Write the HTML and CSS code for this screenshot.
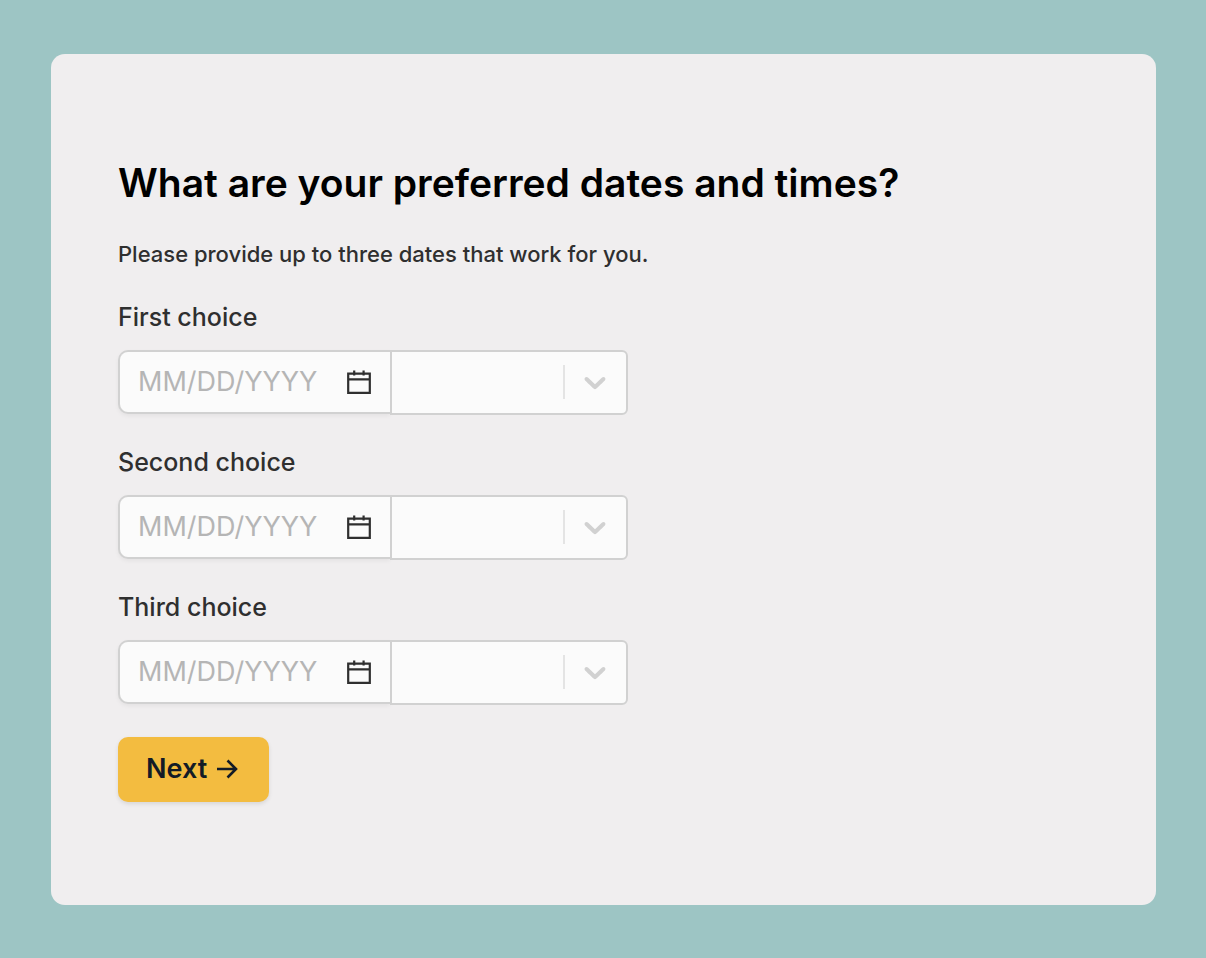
FILE: index.html
```html
<!DOCTYPE html>
<html lang="en">
<head>
    <meta charset="UTF-8">
    <meta name="viewport" content="width=device-width, initial-scale=1">
    <title>Preferred dates and times</title>
    <link rel="stylesheet" href="styles.css">
</head>
<body>

<svg class="sprite" aria-hidden="true">
    <symbol id="calendar" viewBox="0 0 24 24">
        <path d="M1.2 3.7h21.6v19.1H1.2zM1.2 9.3h21.6M7.2 .5v5M16.6 .5v5" fill="none" stroke="currentColor" stroke-width="2.2"/>
    </symbol>
    <symbol id="chevron" viewBox="0 0 20 20">
        <path d="M4.516 7.548c.436-.446 1.043-.481 1.576 0L10 11.295l3.908-3.747c.533-.481 1.141-.446 1.574 0 .436.445.408 1.197 0 1.615-.406.418-4.695 4.502-4.695 4.502a1.095 1.095 0 0 1-1.576 0S4.924 9.581 4.516 9.163c-.409-.418-.436-1.17 0-1.615z" fill="currentColor"/>
    </symbol>
</svg>

<main class="card">
    <h1>What are your preferred dates and times?</h1>
    <p class="hint">Please provide up to three dates that work for you.</p>

    <form id="datesForm">
        <div class="choice">
            <label for="date1">First choice</label>
            <div class="fields">
                <div class="date">
                    <input type="text" id="date1" name="date1" placeholder="MM/DD/YYYY">
                    <button type="button" class="picker" aria-label="Open calendar"><svg><use href="#calendar"/></svg></button>
                </div>
                <div class="time">
                    <select name="time1" aria-label="First choice time"><option value=""></option></select>
                    <span class="indicator"><svg><use href="#chevron"/></svg></span>
                </div>
            </div>
        </div>

        <div class="choice">
            <label for="date2">Second choice</label>
            <div class="fields">
                <div class="date">
                    <input type="text" id="date2" name="date2" placeholder="MM/DD/YYYY">
                    <button type="button" class="picker" aria-label="Open calendar"><svg><use href="#calendar"/></svg></button>
                </div>
                <div class="time">
                    <select name="time2" aria-label="Second choice time"><option value=""></option></select>
                    <span class="indicator"><svg><use href="#chevron"/></svg></span>
                </div>
            </div>
        </div>

        <div class="choice">
            <label for="date3">Third choice</label>
            <div class="fields">
                <div class="date">
                    <input type="text" id="date3" name="date3" placeholder="MM/DD/YYYY">
                    <button type="button" class="picker" aria-label="Open calendar"><svg><use href="#calendar"/></svg></button>
                </div>
                <div class="time">
                    <select name="time3" aria-label="Third choice time"><option value=""></option></select>
                    <span class="indicator"><svg><use href="#chevron"/></svg></span>
                </div>
            </div>
        </div>

        <button type="submit" class="next">
            Next
            <svg viewBox="0 0 22 20" aria-hidden="true"><path d="M1 10h19M11.5 1.5L20 10l-8.5 8.5" fill="none" stroke="currentColor" stroke-width="2.6"/></svg>
        </button>
    </form>
</main>

</body>
</html>
```
FILE: styles.css
```css
* {
    box-sizing: border-box;
}

body {
    font-family: Inter, sans-serif;
    font-weight: 500;
    background: #9dc5c4;
    color: #2f2f2f;
    margin: 0;
    padding: 54px 50px 53px 51px;
}

.sprite {
    display: none;
}

.card {
    padding: 104px 67px 103px;
    background: #f0eeef;
    border-radius: 14px;
}

h1 {
    margin: 0 0 30px;
    font-size: 39px;
    font-weight: 600;
    line-height: 50px;
    color: #000;
}

.hint {
    margin: 0 0 32px;
    font-size: 22px;
    line-height: 32px;
}

.choice {
    margin-bottom: 32px;
}

label {
    display: block;
    margin-bottom: 18px;
    font-size: 25px;
    line-height: 30px;
}

.fields {
    display: flex;
    align-items: flex-start;
    max-width: 510px;
}

.date {
    display: flex;
    align-items: center;
    flex: 0 0 272px;
    min-width: 0;
    height: 64px;
    padding: 0 19px 0 18px;
    background: #fbfbfb;
    border: 2px solid #d1d1d1;
    border-right: 0;
    border-radius: 10px 0 0 10px;
    box-shadow: 0 2px 4px rgba(0, 0, 0, 0.05);
}

.date input {
    flex: 1;
    width: 100%;
    min-width: 0;
    padding: 0;
    border: 0;
    background: none;
    font: 400 27px/32px Inter, sans-serif;
    color: #2f2f2f;
}

.date input::placeholder {
    color: #b5b5b5;
    opacity: 1;
}

.picker {
    padding: 0;
    border: 0;
    background: none;
    color: #2f2f2f;
    cursor: pointer;
}

.picker svg {
    display: block;
    width: 24px;
    height: 24px;
}

.time {
    position: relative;
    flex: 1;
    height: 65px;
}

.time select {
    appearance: none;
    display: block;
    width: 100%;
    height: 100%;
    padding: 0 70px 0 16px;
    background: #fbfbfb;
    border: 2px solid #d1d1d1;
    border-radius: 0 6px 6px 0;
    font: inherit;
    font-size: 27px;
}

/* divider and arrow over the select */
.indicator {
    position: absolute;
    top: 15px;
    right: 13px;
    display: flex;
    align-items: center;
    justify-content: center;
    width: 52px;
    height: 34px;
    border-left: 2px solid #e4e4e4;
    padding-left: 10px;
    color: #d1d1d1;
    pointer-events: none;
}

.indicator svg {
    width: 36px;
    height: 36px;
    flex: none;
}

.next {
    display: flex;
    align-items: center;
    gap: 9px;
    height: 65px;
    padding: 0 31px 2px 28px;
    background: #f3bc40;
    border: 0;
    border-radius: 10px;
    box-shadow: 0 2px 4px rgba(0, 0, 0, 0.1);
    font: 600 27px/32px Inter, sans-serif;
    color: #131b26;
    cursor: pointer;
}

.next svg {
    width: 22px;
    height: 20px;
}
```
